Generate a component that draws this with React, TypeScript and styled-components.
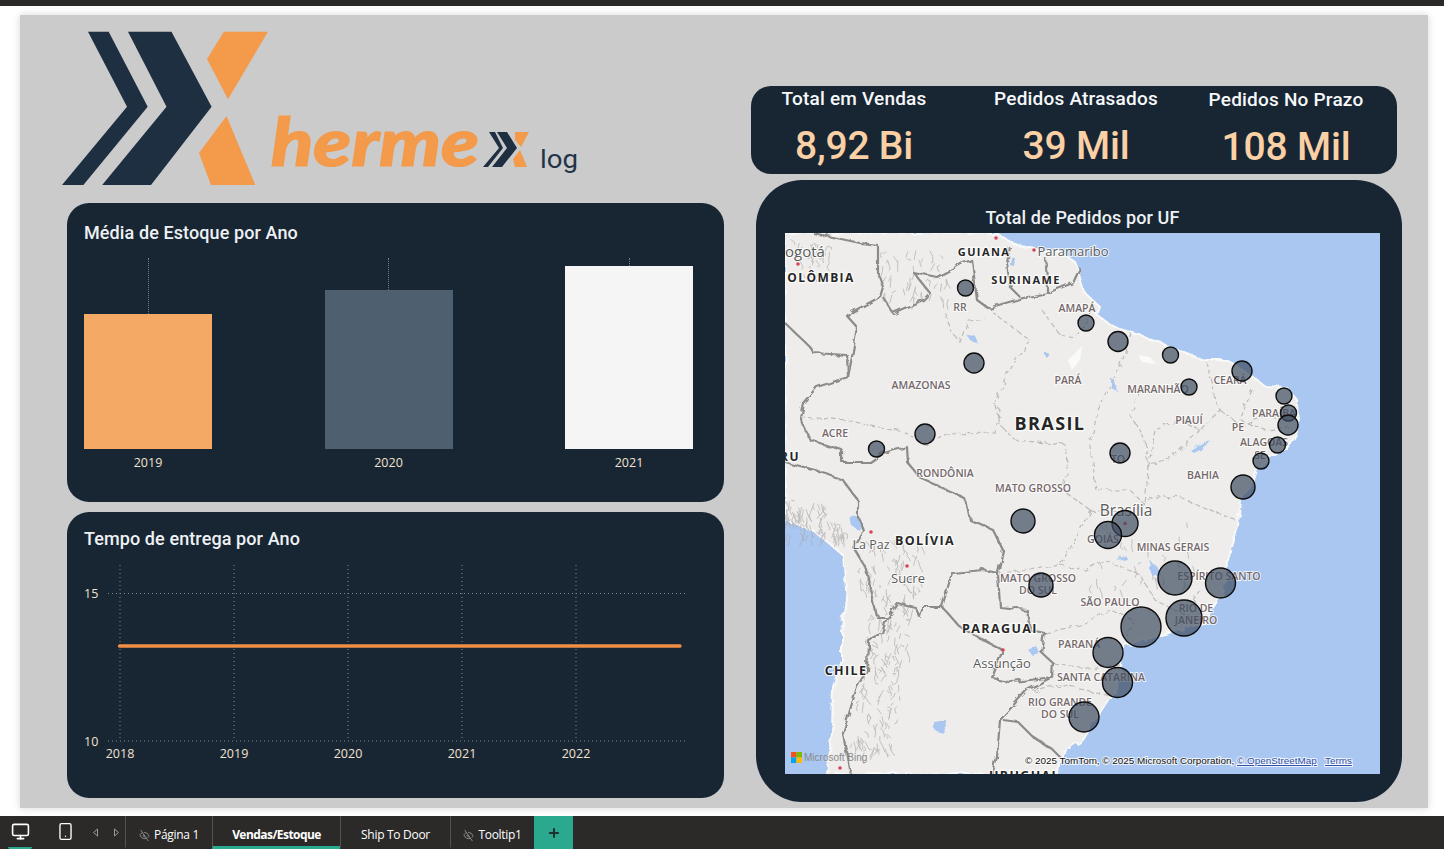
import React from "react"
import styled, { createGlobalStyle } from "styled-components"
import { EyeOff, Monitor, Plus, Smartphone } from "lucide-react"

const navy = "#182634"
const din = `Roboto, "Liberation Sans", sans-serif`
const segoe = `"Open Sans", "Liberation Sans", sans-serif`

const GlobalStyle = createGlobalStyle`
  html, body {
    margin: 0;
    padding: 0;
    height: 100%;
    overflow: hidden;
    background: #fff;
  }
  * { box-sizing: border-box; }
`

const Page = styled.div`
  width: 1444px;
  height: 849px;
  display: flex;
  flex-direction: column;
`

const TopStrip = styled.div`
  height: 6px;
  background: #2b2a29;
`

const Stage = styled.main`
  flex: 1;
  padding: 9px 16px 8px 20px;
`

const Canvas = styled.div`
  height: 793px;
  background: #cbcbcb;
  box-shadow: 0 0 8px rgba(0, 0, 0, 0.16);
  display: flex;
  overflow: hidden;
`

const LeftColumn = styled.div`
  width: 657px;
  margin-left: 47px;
  display: flex;
  flex-direction: column;
  gap: 10px;
`

const LogoRow = styled.div`
  height: 178px;
  margin-left: -7px;
  padding-top: 13px;
`

const RightColumn = styled.div`
  width: 651px;
  margin-left: 27px;
  padding-top: 71px;
  display: flex;
  flex-direction: column;
  gap: 6px;
`

const ChartCard = styled.section<{ $height: number; $top: number }>`
  height: ${(p) => p.$height}px;
  background: ${navy};
  border-radius: 22px;
  padding: ${(p) => p.$top}px 31px 0 17px;
`

const CardTitle = styled.h2`
  margin: 0;
  font: 500 18px/24px ${din};
  letter-spacing: 0.1px;
  color: #eef1f3;
`

const BarChart = styled.div`
  height: 191px;
  margin-top: 13px;
  display: flex;
  justify-content: space-between;
`

const BarColumn = styled.div`
  width: 128px;
  display: flex;
  flex-direction: column;
  align-items: center;
`

const Tick = styled.div`
  flex: 1;
  border-left: 1px dotted #6f7d89;
`

const Bar = styled.div<{ $height: number; $color: string }>`
  width: 100%;
  height: ${(p) => p.$height}px;
  flex-shrink: 0;
  background: ${(p) => p.$color};
`

const BarLabel = styled.span`
  height: 0;
  font: 12.5px/28px ${segoe};
  color: #f3e2cf;
`

const LineSvg = styled.svg`
  display: block;
  margin: 3px 0 0 -17px;
`

const AxisText = styled.text`
  font: 12.5px ${segoe};
  fill: #f3e2cf;
`

const KpiCard = styled.section`
  width: 646px;
  height: 88px;
  background: ${navy};
  border-radius: 20px;
  padding-right: 20px;
  display: grid;
  grid-template-columns: 206px 238px 182px;
`

const Kpi = styled.div<{ $offset?: number }>`
  display: flex;
  flex-direction: column;
  align-items: center;
  padding-top: ${(p) => p.$offset ?? 0}px;
`

const KpiLabel = styled.span`
  font: 500 19px/26px ${din};
  letter-spacing: 0.2px;
  color: #f6f8f9;
`

const KpiValue = styled.span`
  margin-top: 11px;
  font: 500 39px/46px ${din};
  letter-spacing: -0.2px;
  color: #fbd0a4;
`

const MapCard = styled.section`
  width: 646px;
  height: 622px;
  margin-left: 5px;
  background: ${navy};
  border-radius: 46px;
  padding: 26px 22px 0 29px;
`

const MapTitle = styled.h2`
  margin: 0 0 3px;
  text-align: center;
  font: 500 18px/24px ${din};
  letter-spacing: 0.1px;
  color: #eef1f3;
`

const MapSvg = styled.svg`
  display: block;
`

const StateLabel = styled.text`
  font: 600 10.5px ${segoe};
  fill: #75686a;
  text-anchor: middle;
  paint-order: stroke;
  stroke: rgba(255, 255, 255, 0.75);
  stroke-width: 2px;
`

const CountryLabel = styled.text<{ $size?: number }>`
  font: 700 ${(p) => p.$size ?? 12}px ${segoe};
  letter-spacing: 1.4px;
  fill: #262626;
  text-anchor: middle;
  paint-order: stroke;
  stroke: rgba(255, 255, 255, 0.8);
  stroke-width: 2.5px;
`

const CityLabel = styled.text<{ $size?: number }>`
  font: 400 ${(p) => p.$size ?? 13}px ${segoe};
  fill: #5b5b5b;
  text-anchor: middle;
  paint-order: stroke;
  stroke: rgba(255, 255, 255, 0.8);
  stroke-width: 2px;
`

const Credit = styled.text`
  font: 9.9px "Liberation Sans", sans-serif;
  fill: #111;
  paint-order: stroke;
  stroke: rgba(255, 255, 255, 0.8);
  stroke-width: 2px;
`

const CreditLink = styled.tspan`
  fill: #2f4fa5;
  text-decoration: underline;
`

const BingText = styled.text`
  font: 10px "Liberation Sans", sans-serif;
  fill: #8a8a8a;
`

const WordMark = styled.text`
  font: italic 900 66px Lato, "Open Sans", sans-serif;
  fill: #f39a4b;
  stroke: #f39a4b;
  stroke-width: 1.2px;
`

const LogMark = styled.text`
  font: 400 26px ${din};
  fill: #22344a;
`

const TabBar = styled.nav`
  height: 33px;
  background: #2b2a29;
  display: flex;
  color: #fff;
  font: 12px ${segoe};
`

const ViewButton = styled.div<{ $active?: boolean; $width: number }>`
  width: ${(p) => p.$width}px;
  display: flex;
  align-items: center;
  justify-content: center;
  border-bottom: 2px solid ${(p) => (p.$active ? "#2aa98e" : "transparent")};
  border-radius: 0 0 2px 2px;
`

const Views = styled.div`
  width: 125px;
  padding-left: 8px;
  display: flex;
  align-items: stretch;
  gap: 8px;
`

const Pager = styled.div`
  margin-left: -6px;
  display: flex;
  align-items: center;
  gap: 14px;
`

const Tab = styled.div<{ $width: number; $active?: boolean }>`
  width: ${(p) => p.$width}px;
  display: flex;
  align-items: center;
  justify-content: center;
  gap: 4px;
  padding-top: 6px;
  border-left: 1px solid #55534f;
  border-bottom: 3px solid ${(p) => (p.$active ? "#2aa98e" : "transparent")};
  font-weight: ${(p) => (p.$active ? 700 : 400)};
  letter-spacing: ${(p) => (p.$active ? "-0.55px" : "-0.3px")};
`

const HiddenIcon = styled(EyeOff)`
  color: #8b8a88;
  margin-top: 2px;
  transform: rotate(10deg);
`

const AddTab = styled.div`
  width: 39px;
  background: #2aa98e;
  display: flex;
  align-items: center;
  justify-content: center;
  color: #20302c;
`

const bars = [
  { year: "2019", height: 135, color: "#f4a965" },
  { year: "2020", height: 159, color: "#4e5f6f" },
  { year: "2021", height: 183, color: "#f5f5f5" },
]

const kpis = [
  { label: "Total em Vendas", value: "8,92 Bi", offset: 0 },
  { label: "Pedidos Atrasados", value: "39 Mil", offset: 0 },
  { label: "Pedidos No Prazo", value: "108 Mil", offset: 1 },
]

const bubbles = [
  [965.5, 288, 8], [1086, 323, 8], [1118, 341.5, 10], [1170.5, 355, 8], [974, 363, 10],
  [1242, 371, 10], [1189, 387, 8], [1284, 396, 8], [1288.5, 413, 8], [1288, 425, 10],
  [1277.5, 445, 8], [1261, 461, 8], [876.5, 449, 8], [925, 434, 10], [1120, 453, 10],
  [1243, 487, 12], [1023, 521, 12], [1125, 523.5, 13], [1108, 535, 13.5], [1041, 585, 12],
  [1175, 578, 17], [1220.5, 583, 15], [1184, 618, 18], [1141, 627, 20], [1108, 652.5, 15],
  [1117.5, 682.5, 15], [1084, 717, 15],
]

const states: [string, number, number][] = [
  ["RR", 960, 311], ["AMAPÁ", 1077, 312], ["AMAZONAS", 921, 389], ["PARÁ", 1068, 384],
  ["ACRE", 835, 437], ["RONDÔNIA", 945, 477], ["MATO GROSSO", 1033, 492], ["MARANHÃO", 1158, 393],
  ["PIAUÍ", 1189, 424], ["CEARÁ", 1230, 384], ["PARAÍBA", 1274, 417], ["PE", 1238, 431],
  ["ALAGOAS", 1264, 446], ["SE", 1260, 459], ["TO", 1118, 463], ["BAHIA", 1203, 479],
  ["GOIÁS", 1103, 543], ["MINAS GERAIS", 1173, 551], ["ESPÍRITO SANTO", 1219, 580], ["SÃO PAULO", 1110, 606],
  ["MATO GROSSO", 1038, 582], ["DO SUL", 1038, 594], ["RIO DE", 1196, 612], ["JANEIRO", 1196, 624],
  ["PARANÁ", 1079, 648], ["SANTA CATARINA", 1101, 681], ["RIO GRANDE", 1060, 706], ["DO SUL", 1060, 718],
]

const land =
  "M785 233 L997 233 L1003 238 L1012 243 L1026 247 L1040 250 L1060 252 L1075 262 L1079 272 L1085 293 L1100 307 L1097 315 L1113 327 L1130 332 L1160 343 L1190 355 L1207 360 L1227 360 L1247 373 L1267 387 L1287 388 L1297 400 L1298 427 L1290 443 L1273 457 L1257 470 L1253 483 L1240 500 L1238 527 L1228 560 L1227 580 L1220 597 L1203 623 L1180 630 L1153 637 L1123 647 L1120 663 L1123 677 L1110 697 L1097 717 L1083 740 L1073 747 L1060 757 L1058 774 L827 774 L828 767 L832 733 L833 687 L842 660 L842 633 L847 600 L843 555 L813 530 L785 520 Z"

const borders = [
  "M813 233 L860 243 L878 245 L878 273 L883 287 L880 297 L852 312 L848 317 L857 327 L852 357 L848 377 L817 387 L803 403 L800 417 L810 440 L842 450 L842 462 L870 462 L883 453 L907 447 L908 463 L920 478 L963 497 L967 505 L970 520 L993 530 L1003 550 L998 573 L1000 607 L1027 610 L1030 630 L1045 633 L1042 653 L1053 663 L1052 677 L1030 680 L1013 682 L992 678 L1000 657",
  "M785 323 L810 347 L813 353 L847 355 L848 377",
  "M883 297 L893 313 L923 300 L930 293 L913 272 L937 277 L963 263 L972 260 L977 300 L988 308 L1023 298 L1047 293 L1073 283 L1080 268",
  "M1010 247 L1007 263 L1010 287 L1020 297",
  "M1045 257 L1047 277 L1047 292",
  "M858 500 L858 517 L863 530 L853 547 L867 570 L877 617 L887 617 L897 603 L915 607 L920 617 L923 607 L942 607 L952 573 L983 570 L998 573",
  "M942 607 L960 627 L983 640 L1003 650 L1000 657",
  "M887 617 L882 633 L868 640 L867 670 L857 687 L843 733 L850 774",
  "M1052 677 L1027 690 L1000 720 L997 757 L993 774",
  "M1003 720 L1018 722 L1033 737 L1053 750 L1060 757",
  "M858 500 L843 480 L815 470 L785 462",
]

const stateLines = [
  "M800 417 L847 420 L880 428 L905 432 L925 445 L950 434 L995 433 L1000 410 L995 405 L1010 370 L1022 350",
  "M1022 350 L1030 340 L1020 333 L1000 318 L988 308",
  "M945 313 L950 330 L960 342 L968 320 L985 318",
  "M995 405 L1000 425 L1015 440 L1065 445 L1068 470 L1062 490 L1090 510",
  "M1042 310 L1060 335 L1075 338 L1095 308",
  "M1130 332 L1120 370 L1098 410 L1090 445 L1095 490",
  "M1145 385 L1130 415 L1145 440 L1148 470 L1145 505 L1130 490 L1095 490",
  "M1207 362 L1215 400 L1220 410 L1200 430 L1180 420 L1155 430 L1148 470",
  "M1220 410 L1240 425 L1270 415 L1290 422",
  "M1252 390 L1240 420 L1265 430 L1290 428",
  "M1200 430 L1170 460 L1150 465",
  "M1090 510 L1075 540 L1060 565 L1030 570 L998 573",
  "M1090 510 L1130 515 L1150 500 L1175 495 L1210 510 L1235 520",
  "M1060 565 L1085 570 L1105 560 L1140 575 L1155 600 L1185 615 L1200 620",
  "M1200 590 L1185 612 L1175 625",
  "M1045 633 L1080 625 L1110 610 L1135 620 L1125 640",
  "M1053 663 L1085 668 L1120 665",
  "M1032 690 L1060 685 L1110 695",
]

const water = [
  "M856 516 l5 4 l-2 10 l-6 -3 l-2 -9 z",
  "M934 722 l12 -2 l2 8 l-5 6 l-9 -5 z",
  "M1011 257 l4 1 l-1 8 l-4 -1 z",
  "M968 336 l8 1 l3 7 l-8 -3 z",
  "M1043 352 l6 0 l-2 6 z",
  "M1110 377 l5 5 l3 10 l-6 -3 z",
  "M1190 450 l12 -7 l8 -3 l-5 6 l-12 6 z",
  "M1150 568 l6 -3 l3 8 l-6 3 z",
  "M1125 555 l-8 6 l10 -2 z",
  "M1028 650 l8 -4 l4 8 l-7 2 z",
  "M1150 560 l8 10 l-4 4 z",
]

// soft relief strokes for the Andes and the northern highlands
const rnd = (() => {
  let s = 12345
  return () => {
    s = (s * 16807) % 2147483647
    return s / 2147483647
  }
})()

const scatter = (count: number, x: number, y: number, w: number, h: number, slant: number) => {
  let d = ""
  for (let i = 0; i < count; i++) {
    const py = y + rnd() * h
    const px = x + rnd() * w + (y + h - py) * slant
    d += `M${px.toFixed(1)} ${py.toFixed(1)} l${(rnd() * 7 - 3).toFixed(1)} ${(rnd() * 8).toFixed(1)} l${(rnd() * 6 - 3).toFixed(1)} ${(rnd() * 6).toFixed(1)} `
  }
  return d
}

const relief = [
  scatter(130, 848, 605, 45, 150, 0.15),
  scatter(110, 790, 500, 60, 40, -0.7),
  scatter(70, 855, 540, 60, 70, 0.1),
  scatter(45, 880, 250, 70, 50, 0),
  scatter(35, 1090, 520, 110, 70, 0),
  scatter(30, 790, 235, 40, 40, 0),
].join("")

const Logo = () => (
  <svg width="530" height="160" viewBox="60 28 530 160">
    <polygon fill="#1e2f42" points="88,31.7 108.7,31.7 147.7,106.7 83.4,185 62,185 127,106.7" />
    <polygon fill="#1e2f42" points="128,31.7 171.5,31.7 211.6,106.7 151,185 102.2,185 166.5,106.7" />
    <polygon fill="#f39a4b" points="223.9,31.7 268,31.7 228,99.3 207,59" />
    <polygon fill="#f39a4b" points="226.5,116 255.3,185 211,185 199,153" />
    <WordMark x="271" y="166" textLength="208" lengthAdjust="spacingAndGlyphs">herme</WordMark>
    <polygon fill="#1e2f42" points="489,132 495,132 503,148 488,167 483,167 499,148" />
    <polygon fill="#1e2f42" points="497,132 507,132 517,148 502,167 492,167 507,148" />
    <polygon fill="#f39a4b" points="515,132 529,132 521,147 515,140" />
    <polygon fill="#f39a4b" points="520,150 527,167 515,167 513,159" />
    <LogMark x="540" y="168" textLength="38" lengthAdjust="spacingAndGlyphs">log</LogMark>
  </svg>
)

const LineChart = () => {
  const xs = [120, 234, 348, 462, 576]
  return (
    <LineSvg width="657" height="244" viewBox="67 554 657 244">
      {xs.map((x) => (
        <line key={x} x1={x} x2={x} y1="565" y2="741" stroke="#7d8a95" strokeDasharray="1 3" />
      ))}
      {[593.5, 741].map((y) => (
        <line key={y} x1="108" x2="688" y1={y} y2={y} stroke="#7d8a95" strokeDasharray="1 3" />
      ))}
      <line x1="119.5" x2="680" y1="646" y2="646" stroke="#ee8f45" strokeWidth="3.4" strokeLinecap="round" />
      <AxisText x="84" y="598">15</AxisText>
      <AxisText x="84" y="746">10</AxisText>
      {xs.map((x, i) => (
        <AxisText key={x} x={x} y="758" textAnchor="middle">{2018 + i}</AxisText>
      ))}
    </LineSvg>
  )
}

const BrazilMap = () => (
  <MapSvg width="595" height="541" viewBox="785 233 595 541">
    <defs>
      <filter id="rough" x="-5%" y="-5%" width="110%" height="110%">
        <feTurbulence type="fractalNoise" baseFrequency="0.09" numOctaves="3" seed="4" />
        <feDisplacementMap in="SourceGraphic" scale="7" />
        <feGaussianBlur stdDeviation="0.35" />
      </filter>
      <filter id="soft">
        <feGaussianBlur stdDeviation="0.45" />
      </filter>
    </defs>
    <rect x="785" y="233" width="595" height="541" fill="#a9c7f1" />
    <g filter="url(#rough)">
      <path d={land} fill="#eeedeb" stroke="#f9f9f7" strokeWidth="2" />
    </g>
    <path d={relief} fill="none" stroke="#adacaa" strokeWidth="0.9" opacity="0.75" filter="url(#soft)" />
    <path d="M1068 360 l8 -8 l6 -6 l-2 14 l-8 10 z M1138 355 l12 2 l6 7 l-14 -2 z" fill="#fafafa" filter="url(#soft)" />
    <g filter="url(#rough)">
      {water.map((d) => (
        <path key={d} d={d} fill="#a9c7f1" />
      ))}
      {stateLines.map((d) => (
        <path key={d} d={d} fill="none" stroke="#bcbbb7" strokeWidth="1.2" strokeDasharray="5 3" />
      ))}
      {borders.map((d) => (
        <path key={d} d={d} fill="none" stroke="#8b8b8a" strokeWidth="2.2" strokeLinejoin="round" />
      ))}
    </g>
    {[[996, 238], [1034, 250], [798, 264], [871, 532], [907, 566], [1003, 650], [840, 768]].map(([x, y]) => (
      <circle key={x} cx={x} cy={y} r="1.8" fill="#d8455a" />
    ))}
    {states.map(([name, x, y]) => (
      <StateLabel key={name + y} x={x} y={y}>{name}</StateLabel>
    ))}
    <CountryLabel x="984" y="256" $size={11}>GUIANA</CountryLabel>
    <CountryLabel x="1026" y="284" $size={11}>SURINAME</CountryLabel>
    <CountryLabel x="821" y="282" $size={12}>OLÔMBIA</CountryLabel>
    <CountryLabel x="1050" y="430" $size={18}>BRASIL</CountryLabel>
    <CountryLabel x="925" y="545" $size={12.5}>BOLÍVIA</CountryLabel>
    <CountryLabel x="1000" y="633" $size={12.5}>PARAGUAI</CountryLabel>
    <CountryLabel x="846" y="675" $size={12.5}>CHILE</CountryLabel>
    <CountryLabel x="1023" y="780" $size={12.5}>URUGUAI</CountryLabel>
    <CountryLabel x="790" y="461" $size={12}>RU</CountryLabel>
    <CityLabel x="805" y="257" $size={15}>ogotá</CityLabel>
    <CityLabel x="1073" y="256" $size={13}>Paramaribo</CityLabel>
    <CityLabel x="871" y="549" $size={12.5}>La Paz</CityLabel>
    <CityLabel x="908" y="583" $size={13}>Sucre</CityLabel>
    <CityLabel x="1002" y="668" $size={13}>Assunção</CityLabel>
    <CityLabel x="1126" y="516" $size={15.5}>Brasília</CityLabel>
    <circle cx="1125" cy="523.5" r="1.8" fill="#d8455a" />
    {bubbles.map(([x, y, r]) => (
      <circle key={`${x}-${y}`} cx={x} cy={y} r={r} fill="rgba(62, 76, 96, 0.7)" stroke="#0d0d0d" strokeWidth="1.4" />
    ))}
    <rect x="791" y="752" width="5.5" height="5.5" fill="#f25022" />
    <rect x="796.5" y="752" width="5.5" height="5.5" fill="#7fba00" />
    <rect x="791" y="757.5" width="5.5" height="5.5" fill="#00a4ef" />
    <rect x="796.5" y="757.5" width="5.5" height="5.5" fill="#ffb900" />
    <BingText x="804" y="761">Microsoft Bing</BingText>
    <Credit x="1025" y="764">
      © 2025 TomTom, © 2025 Microsoft Corporation, <CreditLink>© OpenStreetMap</CreditLink>
    </Credit>
    <Credit x="1325" y="764"><CreditLink>Terms</CreditLink></Credit>
  </MapSvg>
)

const Triangle: React.FC<{ left?: boolean }> = ({ left }) => (
  <svg width="7" height="9" viewBox="0 0 7 9">
    <polygon points={left ? "5.5,1 1.5,4.5 5.5,8" : "1.5,1 5.5,4.5 1.5,8"} fill="none" stroke="#9b9a98" />
  </svg>
)

const App: React.FC<{}> = () => {
  return (
    <Page>
      <GlobalStyle />
      <TopStrip />
      <Stage>
        <Canvas>
          <LeftColumn>
            <LogoRow>
              <Logo />
            </LogoRow>
            <ChartCard $height={299} $top={18}>
              <CardTitle>Média de Estoque por Ano</CardTitle>
              <BarChart>
                {bars.map((bar) => (
                  <BarColumn key={bar.year}>
                    <Tick />
                    <Bar $height={bar.height} $color={bar.color} />
                    <BarLabel>{bar.year}</BarLabel>
                  </BarColumn>
                ))}
              </BarChart>
            </ChartCard>
            <ChartCard $height={286} $top={15}>
              <CardTitle>Tempo de entrega por Ano</CardTitle>
              <LineChart />
            </ChartCard>
          </LeftColumn>
          <RightColumn>
            <KpiCard>
              {kpis.map((kpi) => (
                <Kpi key={kpi.label} $offset={kpi.offset}>
                  <KpiLabel>{kpi.label}</KpiLabel>
                  <KpiValue>{kpi.value}</KpiValue>
                </Kpi>
              ))}
            </KpiCard>
            <MapCard>
              <MapTitle>Total de Pedidos por UF</MapTitle>
              <BrazilMap />
            </MapCard>
          </RightColumn>
        </Canvas>
      </Stage>
      <TabBar>
        <Views>
          <ViewButton $active $width={24}><Monitor size={19} /></ViewButton>
          <ViewButton $width={50}><Smartphone size={19} strokeWidth={1.7} /></ViewButton>
          <Pager>
            <Triangle left />
            <Triangle />
          </Pager>
        </Views>
        <Tab $width={87}><HiddenIcon size={11} />Página 1</Tab>
        <Tab $width={128} $active>Vendas/Estoque</Tab>
        <Tab $width={110}>Ship To Door</Tab>
        <Tab $width={84}><HiddenIcon size={11} />Tooltip1</Tab>
        <AddTab><Plus size={14} strokeWidth={3.5} /></AddTab>
      </TabBar>
    </Page>
  )
}

export default App
